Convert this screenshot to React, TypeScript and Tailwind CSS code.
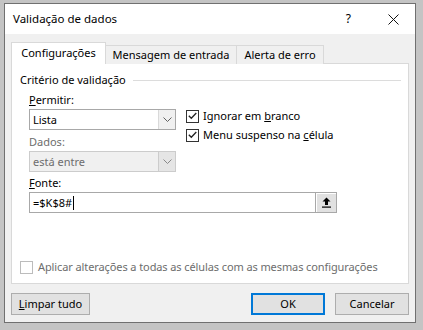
import React from "react";

const font = { fontFamily: '"Noto Sans", "Segoe UI", sans-serif' };

function Chevron({ color = "#606060" }: { color?: string }) {
  return (
    <svg width="9" height="5" viewBox="0 0 9 5">
      <path d="M0.5 0.5 L4.5 4.5 L8.5 0.5" fill="none" stroke={color} strokeWidth="1" />
    </svg>
  );
}

function Check() {
  return (
    <div className="flex h-[13px] w-[13px] items-center justify-center border border-[#333333] bg-white">
      <svg width="9" height="8" viewBox="0 0 9 8">
        <path d="M0.8 3.8 L3.3 6.3 L8.3 1" fill="none" stroke="#222" strokeWidth="1.3" />
      </svg>
    </div>
  );
}

function Select({ value, disabled }: { value: string; disabled?: boolean }) {
  return (
    <div
      className={
        "flex h-[21px] w-[147px] border " +
        (disabled ? "border-[#cccccc] bg-[#f0f0f0] text-[#6d6d6d]" : "border-[#a8a8a8] bg-white text-black")
      }
    >
      <div className="flex flex-1 items-center pl-[3px]">{value}</div>
      <div
        className={
          "flex w-[17px] items-center justify-center border-l " +
          (disabled ? "border-[#cccccc] bg-[#e5e5e5]" : "border-[#d9d9d9] bg-[#f0f0f0]")
        }
      >
        <Chevron color={disabled ? "#888888" : "#606060"} />
      </div>
    </div>
  );
}

export default function App() {
  return (
    <div className="h-[330px] w-[423px] bg-[#c4c4c4] pl-[4px] pt-[3px] text-[11px] leading-[16px] text-black" style={font}>
      <div className="flex h-[320px] w-[412px] flex-col border border-[#707070] bg-[#f0f0f0]">
        {/* title bar */}
        <div className="flex h-[30px] items-center bg-white pl-[8px]">
          <span className="flex-1 text-[11.5px]">Validação de dados</span>
          <span className="mr-[37px] text-[12px]">?</span>
          <svg width="11" height="11" viewBox="0 0 11 11" className="mr-[16px]">
            <path d="M0.5 0.5 L10.5 10.5 M10.5 0.5 L0.5 10.5" stroke="#111" strokeWidth="1" />
          </svg>
        </div>

        <div className="flex flex-1 flex-col px-[6px] pt-[8px]">
          {/* tabs */}
          <div className="relative z-10 flex h-[22px] items-end">
            <div className="flex h-[22px] w-[95px] items-center justify-center border border-b-0 border-[#d9d9d9] bg-white pb-[1px]">
              Configurações
            </div>
            <div className="-ml-px flex h-[19px] w-[132px] items-center justify-center border border-b-0 border-[#d9d9d9] bg-[#f0f0f0]">
              Mensagem de entrada
            </div>
            <div className="-ml-px flex h-[19px] w-[88px] items-center justify-center border border-b-0 border-[#d9d9d9] bg-[#f0f0f0]">
              Alerta de erro
            </div>
          </div>

          {/* panel */}
          <div className="-mt-px flex h-[221px] w-[398px] flex-col border border-[#d9d9d9] bg-white">
            <div className="flex items-center pl-[8px] pr-[7px] pt-[8px]">
              <span>Critério de validação</span>
              <div className="ml-[7px] h-px flex-1 bg-[#dcdcdc]" />
            </div>

            <div className="mt-[4px] flex pl-[17px]">
              <div className="flex w-[147px] flex-col">
                <span>
                  <u>P</u>ermitir:
                </span>
                <div className="mt-[1px]">
                  <Select value="Lista" />
                </div>
                <span className="mt-[4px] text-[#6d6d6d]">Dados:</span>
                <div className="mt-[1px]">
                  <Select value="está entre" disabled />
                </div>
              </div>
              <div className="ml-[10px] mt-[16px] flex flex-col gap-[3px]">
                <div className="flex items-center gap-[4px]">
                  <Check />
                  <span>
                    Ignorar em <u>b</u>ranco
                  </span>
                </div>
                <div className="flex items-center gap-[4px]">
                  <Check />
                  <span>
                    Menu suspenso na <u>c</u>élula
                  </span>
                </div>
              </div>
            </div>

            <div className="mt-[3px] flex flex-col pl-[17px]">
              <span>
                <u>F</u>onte:
              </span>
              <div className="mt-[1px] flex h-[21px] w-[308px] border border-[#a8a8a8] bg-white">
                <div className="flex flex-1 items-center pl-[3px]">
                  =$K$8#<span className="ml-[1px] inline-block h-[14px] w-px bg-black" />
                </div>
                <div className="flex w-[21px] items-center justify-center border-l border-[#a8a8a8] bg-[#e1e1e1] shadow-[inset_1px_1px_0_#ffffff]">
                  <svg width="9" height="11" viewBox="0 0 9 11">
                    <path d="M4.5 0.5 L8.5 4.5 L6 4.5 L6 8 L3 8 L3 4.5 L0.5 4.5 Z" fill="#000" />
                    <rect x="0" y="9.5" width="9" height="1.2" fill="#000" />
                  </svg>
                </div>
              </div>
            </div>

            <div className="mt-auto flex items-center gap-[5px] whitespace-nowrap pb-[8px] pl-[8px] text-[#6d6d6d]">
              <div className="h-[13px] w-[13px] border border-[#bcbcbc] bg-white" />
              <span className="tracking-[-0.1px]">Aplicar alterações a todas as células com as mesmas configurações</span>
            </div>
          </div>

          {/* buttons */}
          <div className="mt-[9px] flex items-center justify-between">
            <button className="flex h-[22px] w-[79px] items-center justify-center border border-[#adadad] bg-[#e1e1e1]">
              <span>
                <u>L</u>impar tudo
              </span>
            </button>
            <div className="flex gap-[10px]">
              <button className="flex h-[22px] w-[74px] items-center justify-center border-2 border-[#0078d7] bg-[#e1e1e1]">
                OK
              </button>
              <button className="flex h-[22px] w-[74px] items-center justify-center border border-[#adadad] bg-[#e1e1e1]">
                Cancelar
              </button>
            </div>
          </div>
        </div>
      </div>
    </div>
  );
}
